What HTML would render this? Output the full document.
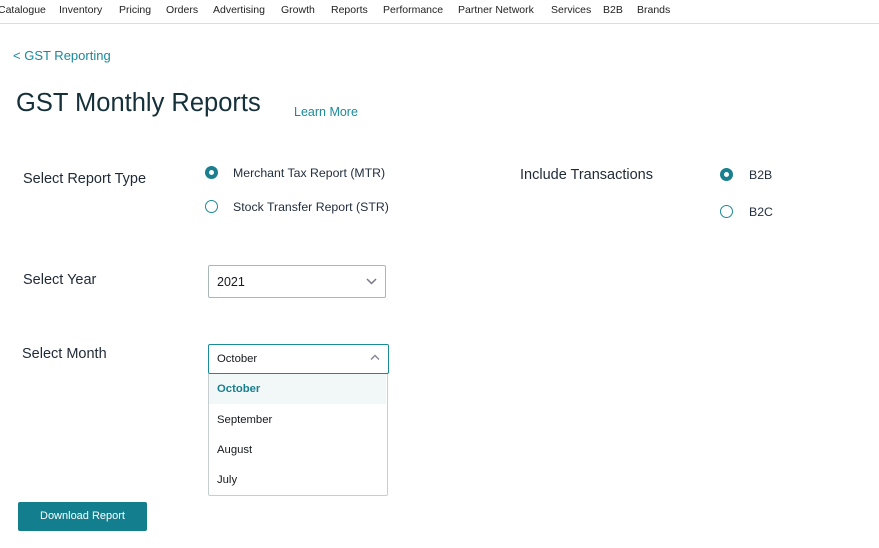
<!DOCTYPE html>
<html><head><meta charset="utf-8"><style>
body{margin:0;width:879px;height:548px;background:#fff;font-family:"Liberation Sans",sans-serif;color:#16191f;position:relative;overflow:hidden}
.a{position:absolute;white-space:nowrap}
.nav{top:4px;font-size:10.5px;color:#222}
.hr{position:absolute;top:23px;left:0;width:879px;height:1px;background:#ddd}
.teal{color:#1a8a99}
.lbl{font-size:14.5px;color:#1f2a36}
.opt{font-size:12.3px;color:#232f3e}
.rad{position:absolute;width:13px;height:13px;border-radius:50%;border:1px solid #1a8a99;box-sizing:border-box}
.rad.on{border:4px solid #1a7f8e}
.box{position:absolute;border:1px solid #aab7b8;border-radius:2px;box-sizing:border-box;background:#fff}
</style></head><body>
<div class="a nav" style="left:-2px">Catalogue</div>
<div class="a nav" style="left:59px">Inventory</div>
<div class="a nav" style="left:119px">Pricing</div>
<div class="a nav" style="left:166px">Orders</div>
<div class="a nav" style="left:213px">Advertising</div>
<div class="a nav" style="left:281px">Growth</div>
<div class="a nav" style="left:331px">Reports</div>
<div class="a nav" style="left:383px">Performance</div>
<div class="a nav" style="left:458px">Partner Network</div>
<div class="a nav" style="left:551px">Services</div>
<div class="a nav" style="left:603px">B2B</div>
<div class="a nav" style="left:637px">Brands</div>
<div class="hr"></div>
<div class="a teal" style="left:13px;top:48px;font-size:13px">&lt; GST Reporting</div>
<div class="a" style="left:16px;top:89px;font-size:25.5px;color:#16303a">GST Monthly Reports</div>
<div class="a teal" style="left:294px;top:105px;font-size:12.5px">Learn More</div>
<div class="a lbl" style="left:23px;top:171px">Select Report Type</div>
<div class="rad on" style="left:205px;top:166px"></div>
<div class="a opt" style="left:233px;top:166px">Merchant Tax Report (MTR)</div>
<div class="rad" style="left:205px;top:200px"></div>
<div class="a opt" style="left:233px;top:200px">Stock Transfer Report (STR)</div>
<div class="a lbl" style="left:520px;top:167px">Include Transactions</div>
<div class="rad on" style="left:720px;top:168px"></div>
<div class="a opt" style="left:749px;top:168px">B2B</div>
<div class="rad" style="left:720px;top:205px"></div>
<div class="a opt" style="left:749px;top:205px">B2C</div>
<div class="a lbl" style="left:23px;top:272px">Select Year</div>
<div class="box" style="left:208px;top:265px;width:178px;height:33px"></div>
<div class="a" style="left:217px;top:275px;font-size:12.5px">2021</div>
<svg class="a" style="left:366px;top:278px" width="11" height="7"><path d="M1 1L5.5 5.5L10 1" fill="none" stroke="#778" stroke-width="1.5"/></svg>
<div class="a lbl" style="left:22px;top:346px">Select Month</div>
<div class="box" style="left:208px;top:373px;width:180px;height:123px;border-color:#c6ced0"></div>
<div class="a" style="left:209px;top:374px;width:177px;height:30px;background:#f2f7f8"></div>
<div class="box" style="left:208px;top:344px;width:181px;height:30px;border:1.5px solid #1a8a99"></div>
<div class="a" style="left:217px;top:353px;font-size:11.3px">October</div>
<svg class="a" style="left:370px;top:354px" width="10" height="7"><path d="M1 5.5L5 1.5L9 5.5" fill="none" stroke="#889" stroke-width="1.5"/></svg>
<div class="a" style="left:217px;top:383px;font-size:11.3px;font-weight:bold;color:#1a7f8e">October</div>
<div class="a" style="left:217px;top:414px;font-size:11.3px">September</div>
<div class="a" style="left:217px;top:444px;font-size:11.3px">August</div>
<div class="a" style="left:217px;top:474px;font-size:11.3px">July</div>
<div class="a" style="left:18px;top:502px;width:129px;height:29px;background:#137f8e;border-radius:2px;color:#fff;font-size:11px;text-align:center;line-height:29px">Download Report</div>
</body></html>
